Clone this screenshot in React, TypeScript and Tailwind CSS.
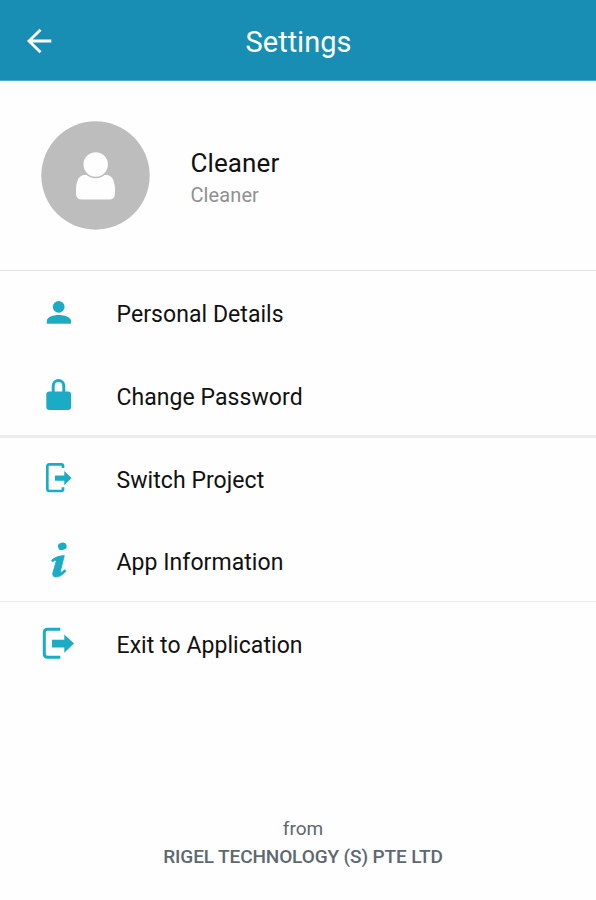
import type { ReactNode } from "react"

function Row({ icon, label }: { icon: ReactNode; label: string }) {
  return (
    <div className="flex h-[78px] items-center pl-[30px]">
      <svg width="60" height="60" viewBox="0 0 60 60" className="shrink-0 fill-[#1babc5] stroke-none">
        {icon}
      </svg>
      <span className="ml-[26.5px] pt-[3px] text-[23px] leading-7 tracking-[0.06px] whitespace-nowrap text-[#111]">{label}</span>
    </div>
  )
}

const personIcon = (
  <>
    <circle cx="28.7" cy="23.8" r="5.9" />
    <path d="M16.8 40.7V38c0-4 6.5-6 11.9-6s12.3 2 12.3 6v2.7z" />
  </>
)

const lockIcon = (
  <>
    <path d="M23.2 27v-7.2a5.3 5.3 0 0 1 10.6 0V27" fill="none" stroke="#1babc5" strokeWidth="3" />
    <rect x="16.3" y="25.5" width="24.8" height="18.5" rx="3" />
  </>
)

const switchIcon = (
  <>
    <path d="M33 19v-2q0-1.7-1.7-1.7H19.5q-2.2 0-2.2 2.2v22.3q0 2.2 2.2 2.2h11.8q1.7 0 1.7-1.7v-2" fill="none" stroke="#1babc5" strokeWidth="2.7" />
    <path d="M25 26.4h9.3V22l7.2 7.100-7.200 7.100v-4.400H25z" />
  </>
)

const infoIcon = (
  <>
    <ellipse cx="32.3" cy="15.3" rx="4.4" ry="3.7" transform="rotate(-15 32.3 15.3)" />
    <path
      d="M21.500 29.500c3-3.500 8-4.600 12.800-5L30.500 40c-.3 1.300.3 1.500 1.300.9l3.200-2.100 1 1.200c-2.800 3.500-6.500 6-10 6-2.900 0-3.900-1.800-3.100-4.500l3.200-11c.2-1-.4-1.300-1.300-1l-2.300 1.300z"
      stroke="#1babc5"
      strokeWidth="0.8"
      strokeLinejoin="round"
    />
  </>
)

const exitIcon = (
  <>
    <path d="M30.3 15.2H17.5q-3.2 0-3.2 3.2V40q0 3.200 3.200 3.200h12.800" fill="none" stroke="#1babc5" strokeWidth="3" />
    <path d="M22 25.700h12.300v-5.200l9.700 9.100-9.700 9.100v-5.200H22z" />
  </>
)

export default function App() {
  return (
    <main className="flex h-[900px] w-[596px] flex-col overflow-hidden bg-[#fefefe] font-['Roboto',sans-serif]">
      <header className="grid h-[81px] shrink-0 grid-cols-[80px_1fr_80px] items-center border-b border-[#58adc7] bg-[#188eb4] text-white">
        <svg width="28" height="28" viewBox="0 0 28 28" className="mt-0.5 ml-[25px] fill-none stroke-white stroke-[2.8]">
          <path d="M26.3 14H4M15.5 2.8 4 14l11.500 11.200" />
        </svg>
        <h1 className="pt-1 pl-px text-center text-[29px] leading-9">Settings</h1>
      </header>

      <section className="flex h-[190px] shrink-0 items-center border-b border-[#e2e2e2] pl-[41px]">
        <svg width="109" height="109" viewBox="0 0 109 109" className="shrink-0">
          <circle cx="54.5" cy="54.5" r="54.2" fill="#bdbdbd" />
          <path d="M42.500 54c-5.500 1-7.500 8-7.500 15v3.500q0 6 6 6h27q6 0 6-6V69c0-7-2-14-7.500-15z" fill="#fefefe" />
          <circle cx="54.700" cy="43.500" r="13" fill="#fefefe" stroke="#bdbdbd" strokeWidth="1.6" />
        </svg>
        <div className="ml-[40.5px] pt-1.5">
          <p className="text-[26px] leading-8 tracking-[0.1px] text-[#111]">Cleaner</p>
          <p className="text-[20px] leading-8 tracking-[0.1px] text-[#909090]">Cleaner</p>
        </div>
      </section>

      <nav>
        <div className="grid gap-[5px] border-b-[3px] border-[#ededed] pt-[3px]">
          <Row icon={personIcon} label="Personal Details" />
          <Row icon={lockIcon} label="Change Password" />
        </div>
        <div className="grid gap-1 border-b border-[#ececec] pt-0.5 pb-px">
          <Row icon={switchIcon} label="Switch Project" />
          <Row icon={infoIcon} label="App Information" />
        </div>
        <div className="pt-[3px]">
          <Row icon={exitIcon} label="Exit to Application" />
        </div>
      </nav>

      <footer className="mt-auto pb-[29px] pl-[10px] text-center text-[#5d686f]">
        <p className="text-[19px] leading-7">from</p>
        <p className="text-[19px] leading-7 font-medium tracking-[-0.12px]">RIGEL TECHNOLOGY (S) PTE LTD</p>
      </footer>
    </main>
  )
}
